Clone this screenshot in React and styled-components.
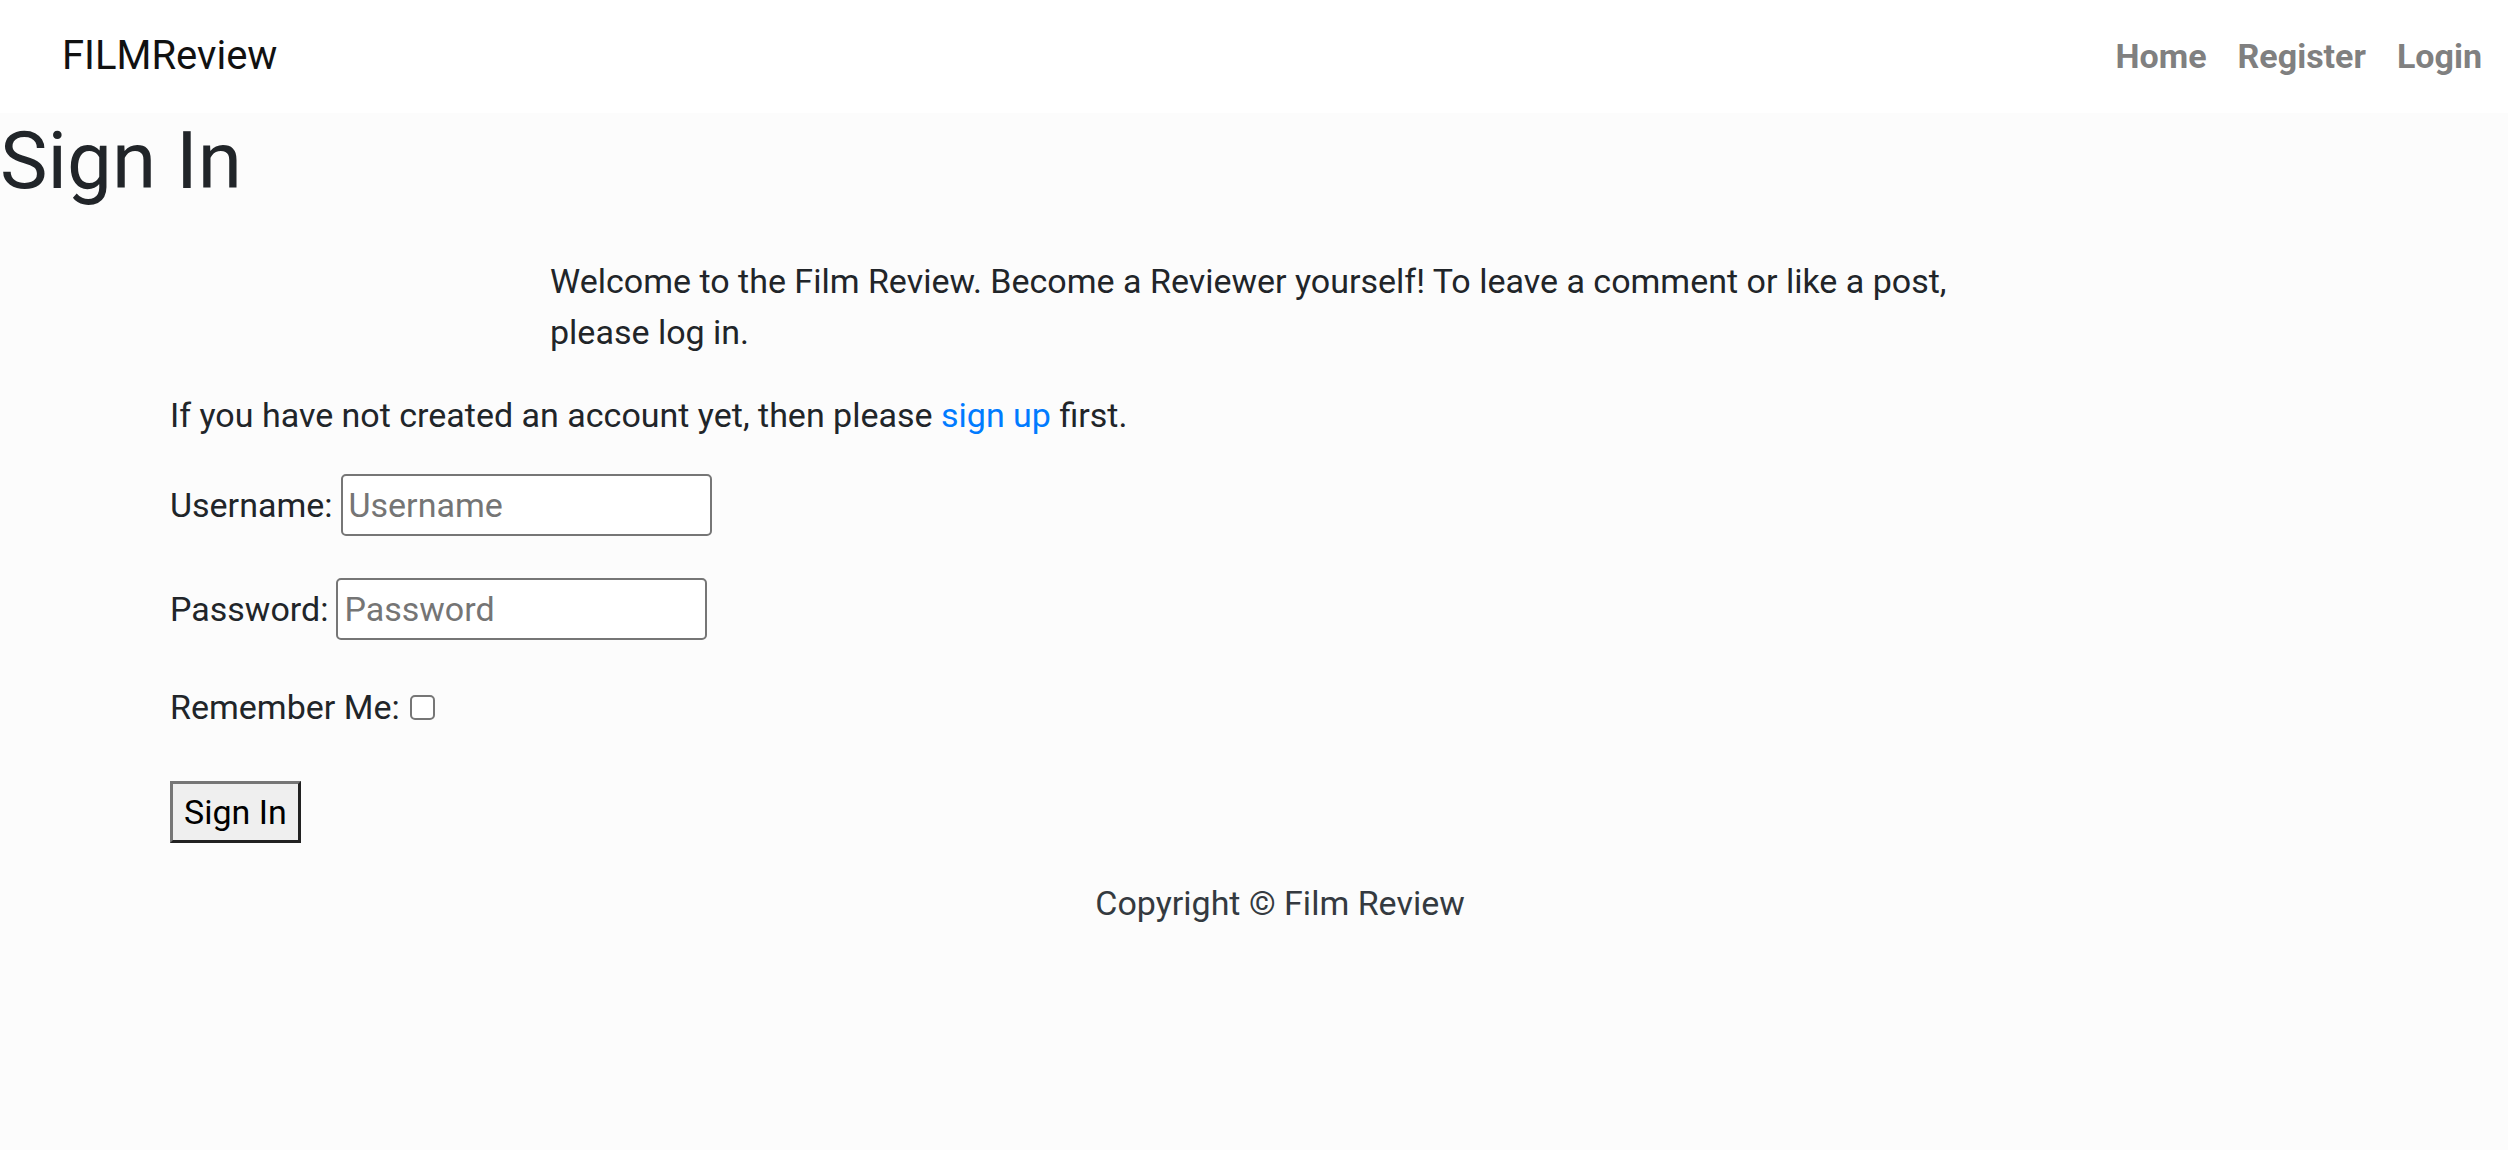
import { createGlobalStyle, styled } from "styled-components";

const GlobalStyle = createGlobalStyle`
  html, body {
    margin: 0;
    padding: 0;
    background: #fcfcfc;
  }
  body {
    font-family: Roboto, "Liberation Sans", Arial, sans-serif;
    color: #212529;
    font-size: 34px;
    line-height: 1.5;
  }
`;

export default function App() {
  return (
    <>
      <GlobalStyle />
      <Navbar>
        <Brand href="#">FILMReview</Brand>
        <NavLinks>
          <NavLink href="#">Home</NavLink>
          <NavLink href="#">Register</NavLink>
          <NavLink href="#">Login</NavLink>
        </NavLinks>
      </Navbar>

      <Main>
        <Title>Sign In</Title>
        <Intro>
          Welcome to the Film Review. Become a Reviewer yourself! To leave a
          comment or like a post, please log in.
        </Intro>

        <FormSection>
          <Note>
            If you have not created an account yet, then please{" "}
            <a href="#">sign up</a> first.
          </Note>

          <form onSubmit={(e) => e.preventDefault()}>
            <Row>
              <label htmlFor="username">Username:</label>
              <TextInput id="username" type="text" placeholder="Username" />
            </Row>
            <Row>
              <label htmlFor="password">Password:</label>
              <TextInput id="password" type="password" placeholder="Password" />
            </Row>
            <Row $plain>
              <label htmlFor="remember">Remember Me:</label>
              <Check id="remember" type="checkbox" />
            </Row>
            <SubmitButton type="submit">Sign In</SubmitButton>
          </form>

          <Footer>Copyright © Film Review</Footer>
        </FormSection>
      </Main>
    </>
  );
}

const Navbar = styled.nav`
  height: 113px;
  background: #ffffff;
  display: flex;
  align-items: center;
  justify-content: space-between;
  padding: 0 26px 0 62px;
  box-sizing: border-box;
`;

const Brand = styled.a`
  font-size: 40px;
  color: #111;
  text-decoration: none;
  line-height: 1;
  margin-top: -2px;
`;

const NavLinks = styled.div`
  display: flex;
  gap: 31px;
`;

const NavLink = styled.a`
  font-size: 34px;
  font-weight: 700;
  color: #808080;
  text-decoration: none;
  line-height: 1;
  margin-top: -2px;
`;

const Main = styled.main`
  min-height: calc(100vh - 113px);
`;

const Title = styled.h1`
  margin: 0;
  font-size: 80px;
  font-weight: 400;
  line-height: 1.2;
`;

const Intro = styled.p`
  max-width: 1408px;
  margin: 47px auto 32px;
`;

const FormSection = styled.section`
  padding: 0 118px 0 170px;

  a {
    color: #007bff;
    text-decoration: none;
  }
`;

const Note = styled.p`
  margin: 0 0 33px;
`;

const Row = styled.div`
  display: flex;
  align-items: center;
  gap: 8px;
  min-height: ${(p) => (p.$plain ? "51px" : "62px")};
  margin-bottom: ${(p) => (p.$plain ? "48px" : "42px")};
`;

const TextInput = styled.input`
  width: 371px;
  height: 62px;
  box-sizing: border-box;
  border: 2px solid #767676;
  border-radius: 5px;
  background: #fff;
  padding: 0 6px;
  font-family: inherit;
  font-size: 34px;
  color: #212529;

  &::placeholder {
    color: #757575;
  }
`;

const Check = styled.input`
  appearance: none;
  width: 25px;
  height: 25px;
  margin: 0 0 0 2px;
  border: 2px solid #767676;
  border-radius: 5px;
  background: #fff;
  box-sizing: border-box;
`;

const SubmitButton = styled.button`
  display: block;
  height: 62px;
  padding: 0 11px;
  box-sizing: border-box;
  background: #efefef;
  border: 3px solid;
  border-color: #767676 #222 #222 #767676;
  font-family: inherit;
  font-size: 34px;
  color: #000;
  margin: 0;
`;

const Footer = styled.footer`
  text-align: center;
  color: #343a40;
  margin-top: 35px;
`;
